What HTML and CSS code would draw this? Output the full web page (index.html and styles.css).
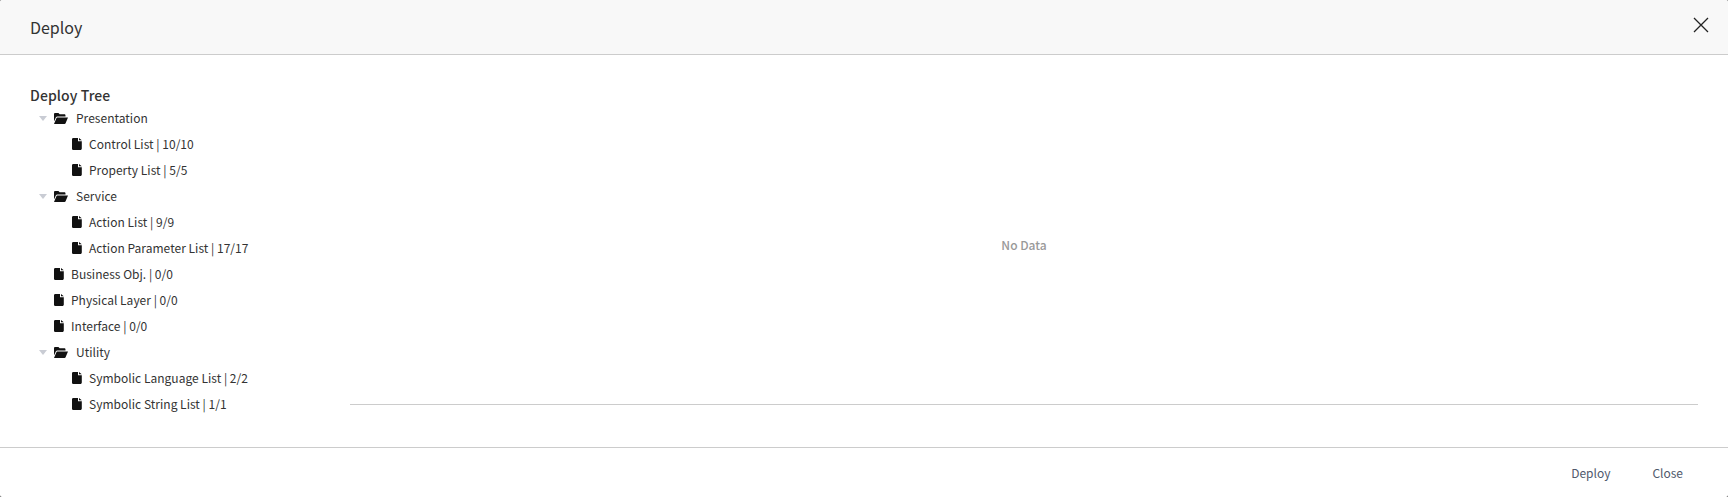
FILE: index.html
```html
<!DOCTYPE html>
<html lang="en">
<head>
<meta charset="utf-8">
<title>Deploy</title>
<link rel="stylesheet" href="styles.css">
</head>
<body>
<svg class="defs" width="0" height="0" aria-hidden="true">
  <symbol id="file" viewBox="0 0 10 12"><path d="M1.2 0H6v3.2h3.8v7.3c0 .8-.6 1.5-1.4 1.5H1.2C.5 12 0 11.3 0 10.5v-9C0 .7.5 0 1.2 0zM7 0l2.8 2.3H7z"/></symbol>
  <symbol id="folder" viewBox="0 0 14 11"><path d="M0 1.2C0 .5.5 0 1.2 0h3.2l1.3 1.3h4.6c.7 0 1.2.5 1.2 1.2v1H3.4c-.7 0-1.3.3-1.6 1L0 8.6z"/><path d="M3.3 4.5H14l-2.3 5.6c-.2.6-.6.9-1.2.9H0l2.3-5.6c.2-.6.5-.9 1-.9z"/></symbol>
</svg>
<div class="modal">
  <header class="head">
    <h1 class="title">Deploy</h1>
    <button class="x" aria-label="Close">
      <svg width="16" height="16" viewBox="0 0 16 16"><path d="M1 1l14 14M15 1L1 15" stroke="#222" stroke-width="1.3" fill="none"/></svg>
    </button>
  </header>
  <main class="body">
    <section class="tree">
      <h2 class="tree-title">Deploy Tree</h2>
      <ul class="list">
        <li class="row folder"><i class="caret"></i><svg class="ic-folder"><use href="#folder"/></svg><span>Presentation</span></li>
        <li class="row child"><svg class="ic-file"><use href="#file"/></svg><span>Control List | 10/10</span></li>
        <li class="row child"><svg class="ic-file"><use href="#file"/></svg><span>Property List | 5/5</span></li>
        <li class="row folder"><i class="caret"></i><svg class="ic-folder"><use href="#folder"/></svg><span>Service</span></li>
        <li class="row child"><svg class="ic-file"><use href="#file"/></svg><span>Action List | 9/9</span></li>
        <li class="row child"><svg class="ic-file"><use href="#file"/></svg><span>Action Parameter List | 17/17</span></li>
        <li class="row top"><svg class="ic-file"><use href="#file"/></svg><span>Business Obj. | 0/0</span></li>
        <li class="row top"><svg class="ic-file"><use href="#file"/></svg><span>Physical Layer | 0/0</span></li>
        <li class="row top"><svg class="ic-file"><use href="#file"/></svg><span>Interface | 0/0</span></li>
        <li class="row folder"><i class="caret"></i><svg class="ic-folder"><use href="#folder"/></svg><span>Utility</span></li>
        <li class="row child"><svg class="ic-file"><use href="#file"/></svg><span>Symbolic Language List | 2/2</span></li>
        <li class="row child"><svg class="ic-file"><use href="#file"/></svg><span>Symbolic String List | 1/1</span></li>
      </ul>
    </section>
    <section class="grid"><span class="empty">No Data</span></section>
  </main>
  <footer class="foot">
    <button class="btn">Deploy</button>
    <button class="btn">Close</button>
  </footer>
</div>
</body>
</html>
```
FILE: styles.css
```css
* { box-sizing: border-box; }
html, body { margin: 0; height: 100%; background: #555; }
body { font-family: "Noto Sans CJK KR", "Noto Sans", sans-serif; color: #333; overflow: hidden; }
.defs { display: block; height: 0; }
.modal { display: flex; flex-direction: column; height: 497px; background: #fff; border-radius: 2px; overflow: hidden; }
.head { height: 55px; flex: none; display: flex; align-items: center; justify-content: space-between; padding: 0 19px 0 30px; background: #f8f8f8; border-bottom: 1px solid #ccc; }
.title { margin: 0; font-size: 16px; font-weight: 400; color: #333; line-height: 1; }
.x { border: 0; background: none; padding: 0; width: 16px; height: 16px; display: block; margin-bottom: 5px; }
.x svg { display: block; }
.body { flex: 1; display: flex; padding: 30px 30px 0; min-height: 0; border-bottom: 1px solid #ccc; }
.tree { width: 320px; flex: none; }
.tree-title { margin: 0; font-size: 14px; font-weight: 500; line-height: 20px; color: #333; letter-spacing: .1px; }
.list { list-style: none; margin: 0; padding: 0; }
.row { height: 26px; display: flex; align-items: center; font-size: 12px; letter-spacing: .02px; color: #333; white-space: nowrap; }
.row span { line-height: 26px; }
.folder { padding-left: 9px; }
.child { padding-left: 42px; }
.top { padding-left: 24px; }
.caret { width: 0; height: 0; border-left: 4px solid transparent; border-right: 4px solid transparent; border-top: 5px solid #c9ccd4; margin-right: 7px; margin-top: 0; }
.ic-folder { width: 14px; height: 11px; fill: #111; margin-right: 8px; margin-top: 0; }
.ic-file { width: 10px; height: 12px; fill: #111; margin-right: 7px; margin-top: 0; }
.grid { flex: 1; height: 320px; display: flex; align-items: center; justify-content: center; border-bottom: 1px solid #ccc; }
.empty { font-size: 12px; font-weight: 500; color: #999; }
.foot { height: 49px; flex: none; display: flex; justify-content: flex-end; align-items: center; padding-right: 45px; gap: 42px; }
.btn { border: 0; background: none; padding: 0; font: inherit; font-size: 12px; color: #50596c; line-height: 20px; }
```
